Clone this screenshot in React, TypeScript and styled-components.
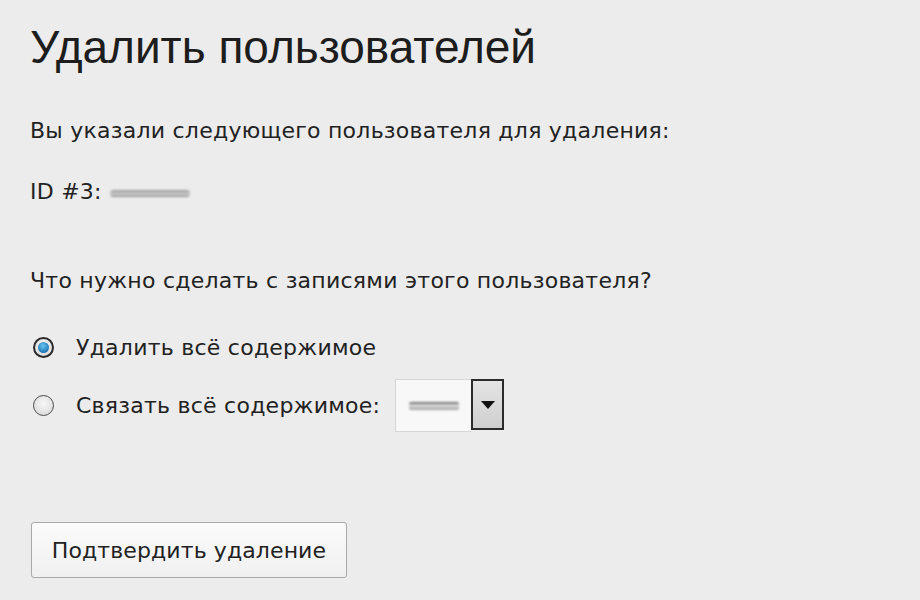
import React from 'react';
import styled, { createGlobalStyle } from 'styled-components';

const GlobalStyle = createGlobalStyle`
  html, body {
    margin: 0;
    padding: 0;
    background: #ececec;
  }
  body {
    width: 920px;
    height: 600px;
    overflow: hidden;
  }
`;

const Page = styled.div`
  display: flex;
  flex-direction: column;
  padding: 21px 0 0 30px;
  color: #222;
  font-family: 'DejaVu Sans', 'Open Sans', sans-serif;
  font-size: 22px;
  letter-spacing: 0.25px;
`;

const Title = styled.h1`
  margin: 0;
  font-family: 'Liberation Sans', Arial, sans-serif;
  font-weight: 400;
  font-size: 46px;
  line-height: 52px;
  letter-spacing: 0;
  color: #1d1d1d;
`;

const Paragraph = styled.p<{ $top: number }>`
  margin: ${(p) => p.$top}px 0 0;
  line-height: 30px;
`;

// Username is smudged out in the screenshot.
const Blurred = styled.span`
  display: inline-block;
  width: 80px;
  height: 7px;
  margin-left: 8px;
  vertical-align: middle;
  border-radius: 4px;
  background: linear-gradient(180deg, #9a9a9a, #cfcfcf 60%, #8a8a8a);
  filter: blur(1.2px);
`;

const OptionList = styled.div`
  display: flex;
  flex-direction: column;
  gap: 19px;
  margin-top: 39px;
`;

const OptionRow = styled.label`
  display: flex;
  align-items: center;
  gap: 22px;
  margin-left: 3px;
`;

const Radio = styled.span<{ $checked?: boolean }>`
  flex: none;
  width: 21px;
  height: 21px;
  border-radius: 50%;
  box-sizing: border-box;
  border: ${(p) => (p.$checked ? '2px solid #2a2a2a' : '1px solid #4a4a4a')};
  background: radial-gradient(circle at 50% 40%, #f8f8f8, #d4d4d4);
  display: flex;
  align-items: center;
  justify-content: center;

  &::after {
    content: '';
    width: 11px;
    height: 11px;
    border-radius: 50%;
    display: ${(p) => (p.$checked ? 'block' : 'none')};
    background: radial-gradient(circle at 45% 35%, #6cc6f2, #1d78b6 70%, #0f4f84);
  }
`;

const Select = styled.div`
  display: flex;
  align-items: stretch;
  height: 53px;
  margin-left: -7px;
`;

const SelectValue = styled.div`
  width: 76px;
  box-sizing: border-box;
  background: #f8f8f8;
  border: 1px solid #d6d6d6;
  border-right: none;
  display: flex;
  align-items: center;
  justify-content: center;
`;

const SelectValueBlur = styled.span`
  width: 50px;
  height: 8px;
  border-radius: 2px;
  background: linear-gradient(180deg, #555, #e0e0e0 40%, #a0a0a0);
  filter: blur(0.8px);
`;

const SelectArrow = styled.div`
  width: 33px;
  box-sizing: border-box;
  border: 2px solid #2b2b2b;
  background: linear-gradient(180deg, #e4e4e4, #cfcfcf);
  display: flex;
  align-items: center;
  justify-content: center;
  margin-bottom: 2px;

  &::after {
    content: '';
    border-left: 7px solid transparent;
    border-right: 7px solid transparent;
    border-top: 8px solid #111;
  }
`;

const SubmitButton = styled.button`
  align-self: flex-start;
  margin: 90px 0 0 1px;
  width: 316px;
  height: 56px;
  border: 1px solid #a9a9a9;
  border-radius: 3px;
  background: linear-gradient(180deg, #fbfbfb, #f0f0f0);
  font-family: 'DejaVu Sans', 'Open Sans', sans-serif;
  font-size: 22px;
  letter-spacing: 0.1px;
  color: #222;
  padding: 0;
`;

export default function App() {
  return (
    <>
      <GlobalStyle />
      <Page>
        <Title>Удалить пользователей</Title>
        <Paragraph $top={43}>Вы указали следующего пользователя для удаления:</Paragraph>
        <Paragraph $top={31}>
          ID #3:<Blurred />
        </Paragraph>
        <Paragraph $top={59}>Что нужно сделать с записями этого пользователя?</Paragraph>
        <OptionList>
          <OptionRow>
            <Radio $checked />
            Удалить всё содержимое
          </OptionRow>
          <OptionRow>
            <Radio />
            Связать всё содержимое:
            <Select>
              <SelectValue>
                <SelectValueBlur />
              </SelectValue>
              <SelectArrow />
            </Select>
          </OptionRow>
        </OptionList>
        <SubmitButton>Подтвердить удаление</SubmitButton>
      </Page>
    </>
  );
}
